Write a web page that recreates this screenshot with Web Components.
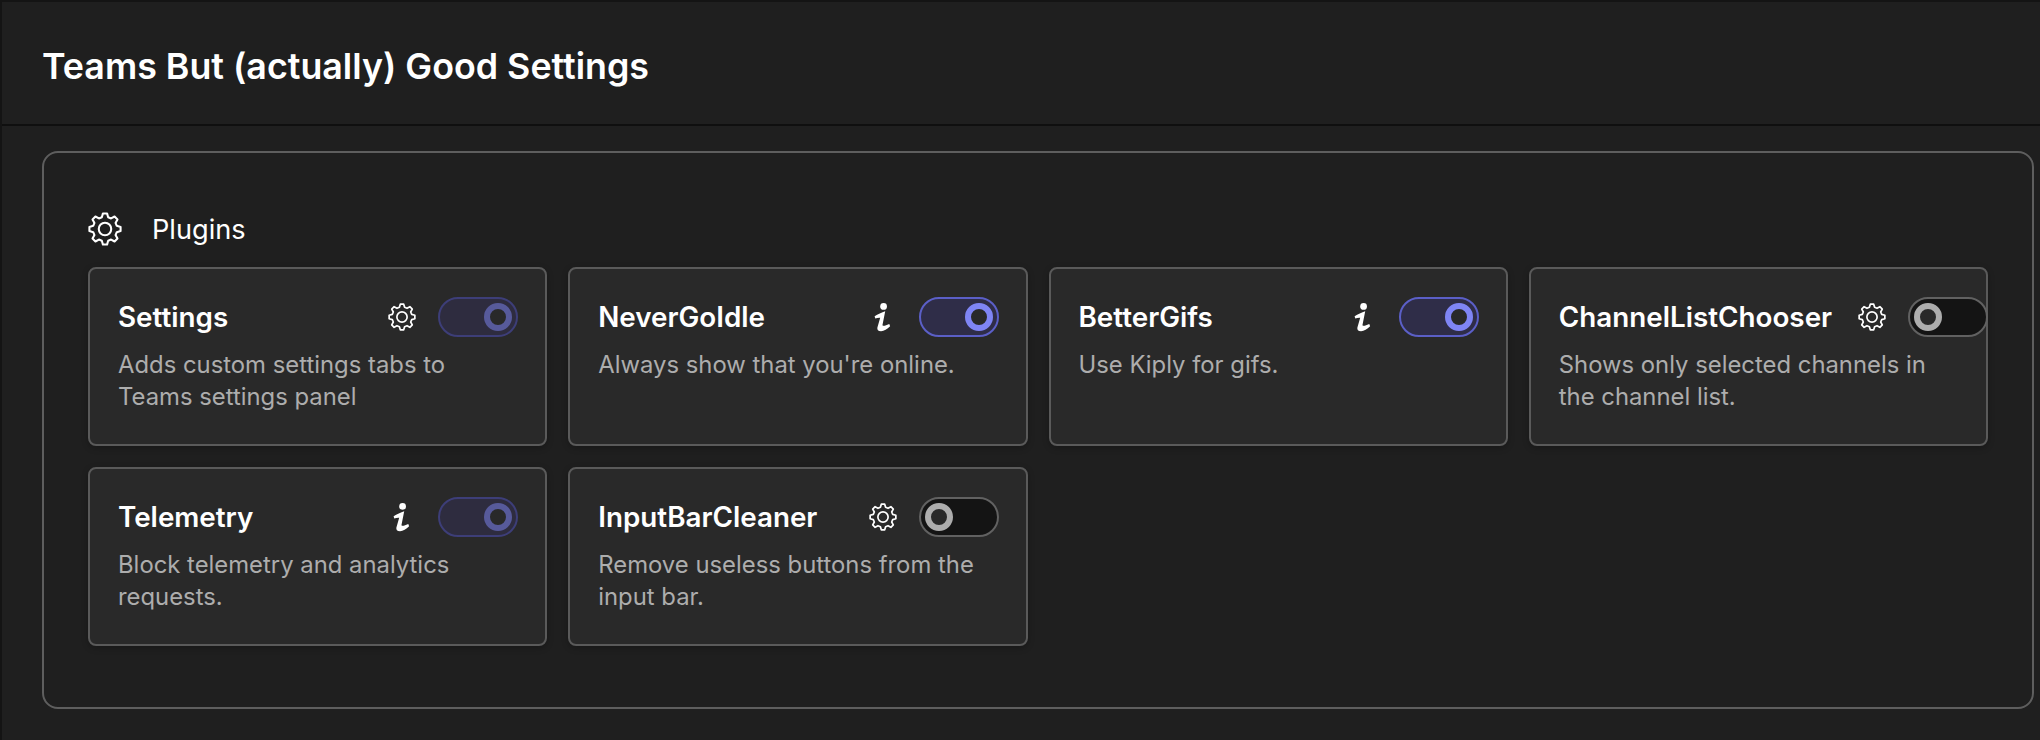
<!DOCTYPE html>
<html>
<head>
<meta charset="utf-8">
<title>Teams But (actually) Good Settings</title>
<style>
    html, body { margin: 0; height: 100%; background: #1f1f1f; overflow: hidden; }
</style>
</head>
<body>
<settings-page>
    <settings-panel heading="Plugins">
        <plugin-card name="Settings" icon="gear" state="dim">Adds custom settings tabs to Teams settings panel</plugin-card>
        <plugin-card name="NeverGoIdle" icon="info" state="on">Always show that you're online.</plugin-card>
        <plugin-card name="BetterGifs" icon="info" state="on">Use Kiply for gifs.</plugin-card>
        <plugin-card name="ChannelListChooser" icon="gear" state="off">Shows only selected channels in the channel list.</plugin-card>
        <plugin-card name="Telemetry" icon="info" state="dim">Block telemetry and analytics requests.</plugin-card>
        <plugin-card name="InputBarCleaner" icon="gear" state="off">Remove useless buttons from the input bar.</plugin-card>
    </settings-panel>
</settings-page>

<script>
(function () {
    // 8 tooth gear, drawn in a 24 box
    function gearPath() {
        var pts = [];
        for (var i = 0; i < 8; i++) {
            var a = -90 + i * 45;
            [[-15, 8.6], [-7.5, 11.1], [7.5, 11.1], [15, 8.6]].forEach(function (p) {
                var r = (a + p[0]) * Math.PI / 180;
                pts.push((12 + p[1] * Math.cos(r)).toFixed(2) + ' ' + (12 + p[1] * Math.sin(r)).toFixed(2));
            });
        }
        return 'M' + pts.join('L') + 'Z';
    }

    let iconTmpl = document.createElement('template');
    iconTmpl.innerHTML = `
        <style>
            :host { display: block; width: 28px; height: 28px; flex: none; color: #fff; }
            :host([size="large"]) { width: 34px; height: 34px; }
            svg { display: block; width: 100%; height: 100%; overflow: visible; }
        </style>
        <svg viewBox="0 0 24 24"></svg>
    `;

    class AppIcon extends HTMLElement {
        connectedCallback() {
            this.attachShadow({ mode: 'open' });
            this.shadowRoot.appendChild(iconTmpl.content.cloneNode(true));
            var svg = this.shadowRoot.querySelector('svg');
            if (this.getAttribute('name') === 'info') {
                svg.innerHTML = `
                    <g transform="translate(-1.5 0)">
                        <circle cx="14" cy="2.9" r="2.9" fill="currentColor"/>
                        <path fill="currentColor" d="M6.3 11.4C9 9.8 12.5 8 15.4 7.1L13.1 18.6C13 19.6 14 19.8 15 19.4L18.9 18 19.6 20C17 22.3 14.5 24.2 11.8 24.2 9.3 24.2 8.3 23 8.7 21L11.1 12.6C9.5 12.5 8.2 12.8 6.9 13.2Z"/>
                    </g>
                `;
            } else {
                svg.innerHTML = `
                    <path fill="none" stroke="currentColor" stroke-width="1.45" stroke-linejoin="round" d="${gearPath()}"/>
                    <circle cx="12" cy="12" r="4.4" fill="none" stroke="currentColor" stroke-width="1.45"/>
                `;
            }
        }
    }
    customElements.define('app-icon', AppIcon);

    let toggleTmpl = document.createElement('template');
    toggleTmpl.innerHTML = `
        <style>
            :host {
                display: flex;
                flex: none;
                align-items: center;
                box-sizing: border-box;
                width: 80px;
                height: 40px;
                padding: 0 4px;
                border: 2px solid #616161;
                border-radius: 20px;
                background: #141414;
            }
            .knob {
                box-sizing: border-box;
                width: 28px;
                height: 28px;
                border: 6px solid #adadad;
                border-radius: 50%;
                background: #292929;
            }
            :host([state="on"]) { justify-content: flex-end; background: #2f2d48; border-color: #5b5fc7; }
            :host([state="on"]) .knob { border-color: #7f85f5; }
            :host([state="dim"]) { justify-content: flex-end; background: #2e2c3f; border-color: #3d3e78; }
            :host([state="dim"]) .knob { border-color: #575a9b; }
        </style>
        <div class="knob"></div>
    `;

    class ToggleSwitch extends HTMLElement {
        connectedCallback() {
            this.attachShadow({ mode: 'open' });
            this.shadowRoot.appendChild(toggleTmpl.content.cloneNode(true));
        }
    }
    customElements.define('toggle-switch', ToggleSwitch);

    let cardTmpl = document.createElement('template');
    cardTmpl.innerHTML = `
        <style>
            :host {
                display: block;
                box-sizing: border-box;
                min-width: 0;
                height: 179px;
                padding: 28px 27px 28px 28px;
                border: 2px solid #5a5a5a;
                border-radius: 8px;
                background: #292929;
                box-shadow: 0 2px 6px rgba(0, 0, 0, 0.25);
            }
            .top { display: flex; align-items: center; gap: 22px; height: 40px; }
            .name {
                flex: 1 0 auto;
                padding-right: 4px;
                font-size: 27.8px;
                font-weight: 600;
                color: #fff;
                white-space: nowrap;
            }
            .desc {
                margin-top: 12px;
                font-size: 23.85px;
                line-height: 32px;
                color: #adadad;
            }
        </style>
        <div class="top">
            <div class="name"></div>
            <app-icon></app-icon>
            <toggle-switch></toggle-switch>
        </div>
        <div class="desc"><slot></slot></div>
    `;

    class PluginCard extends HTMLElement {
        connectedCallback() {
            var content = cardTmpl.content.cloneNode(true);
            // attributes go on before the clone is attached, the children read them when they connect
            content.querySelector('.name').textContent = this.getAttribute('name');
            content.querySelector('app-icon').setAttribute('name', this.getAttribute('icon'));
            content.querySelector('toggle-switch').setAttribute('state', this.getAttribute('state'));
            this.attachShadow({ mode: 'open' });
            this.shadowRoot.appendChild(content);
        }
    }
    customElements.define('plugin-card', PluginCard);

    let panelTmpl = document.createElement('template');
    panelTmpl.innerHTML = `
        <style>
            :host {
                display: block;
                box-sizing: border-box;
                width: 1992px;
                height: 558px;
                padding: 59px 44px 0;
                border: 2px solid #5e5e5e;
                border-radius: 16px;
            }
            .heading { display: flex; align-items: center; gap: 30px; height: 34px; margin-bottom: 21px; }
            .label { font-size: 27.2px; color: #fff; }
            .grid { display: grid; grid-template-columns: repeat(4, 1fr); gap: 21px; }
        </style>
        <div class="heading">
            <app-icon name="gear" size="large"></app-icon>
            <div class="label"></div>
        </div>
        <div class="grid"><slot></slot></div>
    `;

    class SettingsPanel extends HTMLElement {
        connectedCallback() {
            this.attachShadow({ mode: 'open' });
            this.shadowRoot.appendChild(panelTmpl.content.cloneNode(true));
            this.shadowRoot.querySelector('.label').textContent = this.getAttribute('heading');
        }
    }
    customElements.define('settings-panel', SettingsPanel);

    let pageTmpl = document.createElement('template');
    pageTmpl.innerHTML = `
        <style>
            :host {
                display: block;
                box-sizing: border-box;
                height: 740px;
                border-left: 2px solid #141414;
                border-top: 2px solid #141414;
                font-family: Inter, "Liberation Sans", sans-serif;
                background: #1f1f1f;
            }
            header {
                display: flex;
                align-items: center;
                box-sizing: border-box;
                height: 124px;
                padding: 5px 0 0 40px;
                border-bottom: 2px solid #0f0f0f;
                font-size: 35.8px;
                font-weight: 600;
                color: #fff;
            }
            main { padding: 25px 0 0 40px; }
        </style>
        <header>Teams But (actually) Good Settings</header>
        <main><slot></slot></main>
    `;

    class SettingsPage extends HTMLElement {
        connectedCallback() {
            this.attachShadow({ mode: 'open' });
            this.shadowRoot.appendChild(pageTmpl.content.cloneNode(true));
        }
    }
    customElements.define('settings-page', SettingsPage);
})();
</script>
</body>
</html>
